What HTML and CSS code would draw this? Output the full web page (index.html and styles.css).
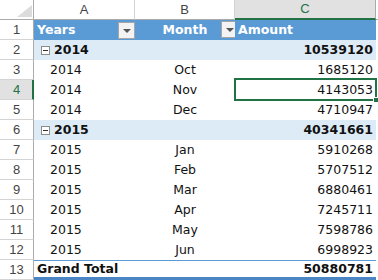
FILE: index.html
```html
<!DOCTYPE html>
<html lang="en">
  <head>
    <meta charset="UTF-8" />
    <title>Pivot table</title>
    <link rel="stylesheet" href="styles.css">
  </head>
  <body>
    <div class="sheet">
      <div class="row col-head">
        <div class="corner"><span class="corner-tri"></span></div>
        <div class="col">A</div>
        <div class="col">B</div>
        <div class="col active">C</div>
        <div class="col blank"></div>
      </div>

      <div class="row">
        <div class="num">1</div>
        <div class="cell head">Years<span class="drop"></span></div>
        <div class="cell head center">Month<span class="drop"></span></div>
        <div class="cell head">Amount</div>
        <div class="cell"></div>
      </div>

      <div class="row">
        <div class="num">2</div>
        <div class="cell sub"><span class="minus"></span>2014</div>
        <div class="cell sub"></div>
        <div class="cell sub right">10539120</div>
        <div class="cell"></div>
      </div>
      <div class="row">
        <div class="num">3</div>
        <div class="cell year">2014</div>
        <div class="cell center">Oct</div>
        <div class="cell right">1685120</div>
        <div class="cell"></div>
      </div>
      <div class="row">
        <div class="num active">4</div>
        <div class="cell year">2014</div>
        <div class="cell center">Nov</div>
        <div class="cell right">4143053</div>
        <div class="cell"></div>
      </div>
      <div class="row">
        <div class="num">5</div>
        <div class="cell year">2014</div>
        <div class="cell center">Dec</div>
        <div class="cell right">4710947</div>
        <div class="cell"></div>
      </div>

      <div class="row">
        <div class="num">6</div>
        <div class="cell sub"><span class="minus"></span>2015</div>
        <div class="cell sub"></div>
        <div class="cell sub right">40341661</div>
        <div class="cell"></div>
      </div>
      <div class="row">
        <div class="num">7</div>
        <div class="cell year">2015</div>
        <div class="cell center">Jan</div>
        <div class="cell right">5910268</div>
        <div class="cell"></div>
      </div>
      <div class="row">
        <div class="num">8</div>
        <div class="cell year">2015</div>
        <div class="cell center">Feb</div>
        <div class="cell right">5707512</div>
        <div class="cell"></div>
      </div>
      <div class="row">
        <div class="num">9</div>
        <div class="cell year">2015</div>
        <div class="cell center">Mar</div>
        <div class="cell right">6880461</div>
        <div class="cell"></div>
      </div>
      <div class="row">
        <div class="num">10</div>
        <div class="cell year">2015</div>
        <div class="cell center">Apr</div>
        <div class="cell right">7245711</div>
        <div class="cell"></div>
      </div>
      <div class="row">
        <div class="num">11</div>
        <div class="cell year">2015</div>
        <div class="cell center">May</div>
        <div class="cell right">7598786</div>
        <div class="cell"></div>
      </div>
      <div class="row">
        <div class="num">12</div>
        <div class="cell year">2015</div>
        <div class="cell center">Jun</div>
        <div class="cell right">6998923</div>
        <div class="cell"></div>
      </div>

      <div class="row">
        <div class="num">13</div>
        <div class="cell total">Grand Total</div>
        <div class="cell total"></div>
        <div class="cell total right">50880781</div>
        <div class="cell"></div>
      </div>

      <!-- active cell C4 -->
      <div class="selection"><span class="handle"></span></div>
    </div>
  </body>
</html>
```

FILE: styles.css
```css
* {
  box-sizing: border-box;
}

body {
  margin: 0;
  background: #fff;
  font-family: "DejaVu Sans", Verdana, sans-serif;
  font-size: 12.5px;
  color: #111;
}

.sheet {
  position: relative;
  width: 378px;
  height: 280px;
  overflow: hidden;
}

.row {
  display: grid;
  grid-template-columns: 34px 101px 100px 141px 2px;
  height: 20px;
}

/* column letters */
.col-head .col,
.corner {
  border-right: 1px solid #d4d4d4;
  border-bottom: 1px solid #ababab;
  font-family: "Liberation Sans", Arial, sans-serif;
  font-size: 13px;
  color: #444;
  text-align: center;
  line-height: 19px;
}

.corner {
  position: relative;
  border-right-color: #ababab;
}

.corner-tri {
  position: absolute;
  right: 1px;
  bottom: 2px;
  border-left: 15px solid transparent;
  border-bottom: 12px solid #dcdcdc;
}

.col-head .col.active {
  background: #e1e1e1;
  color: #217346;
  border-right-color: #ababab;
  border-bottom: 2px solid #217346;
  line-height: 18px;
}

.col-head .col.blank {
  border-right: none;
}

/* row numbers */
.num {
  border-right: 1px solid #ababab;
  border-bottom: 1px solid #d4d4d4;
  font-family: "Liberation Sans", Arial, sans-serif;
  font-size: 13px;
  color: #444;
  text-align: center;
  line-height: 19px;
}

.num.active {
  background: #e1e1e1;
  color: #217346;
  border-right: 2px solid #217346;
  padding-left: 1px;
}

/* pivot cells */
.cell {
  display: flex;
  align-items: center;
  padding: 0 3px;
  line-height: 20px;
  white-space: nowrap;
}

.cell.center {
  justify-content: center;
}

.cell.right {
  justify-content: flex-end;
}

.cell.year {
  padding-left: 16px;
}

.cell.head {
  position: relative;
  background: #5b9bd5;
  color: #fff;
  font-weight: bold;
}

.drop {
  margin-left: auto;
  width: 17px;
  height: 17px;
  background: #f3f3f3;
  border: 1px solid #a6a6a6;
  position: relative;
}

.center .drop {
  position: absolute;
  right: 0;
  top: 1px;
}

.head .drop {
  margin-right: -3px;
}

.drop::after {
  content: "";
  position: absolute;
  left: 4px;
  top: 6px;
  border-left: 4px solid transparent;
  border-right: 4px solid transparent;
  border-top: 4px solid #555;
}

.cell.sub {
  background: #ddebf7;
  font-weight: bold;
}

.minus {
  position: relative;
  width: 9px;
  height: 9px;
  margin: 0 4px 0 4px;
  border: 1px solid #8c8c8c;
  background: #fff;
}

.minus::after {
  content: "";
  position: absolute;
  left: 1px;
  top: 3px;
  width: 5px;
  height: 1px;
  background: #333;
}

.cell.total {
  font-weight: bold;
  border-top: 1px solid #5b9bd5;
  border-bottom: 3px solid #4a86c5;
  line-height: 16px;
}

/* active cell frame */
.selection {
  position: absolute;
  left: 234px;
  top: 78px;
  width: 143px;
  height: 23px;
  border: 2px solid #217346;
}

.handle {
  position: absolute;
  right: -4px;
  bottom: -4px;
  width: 6px;
  height: 6px;
  background: #217346;
  border: 1px solid #fff;
}
```
